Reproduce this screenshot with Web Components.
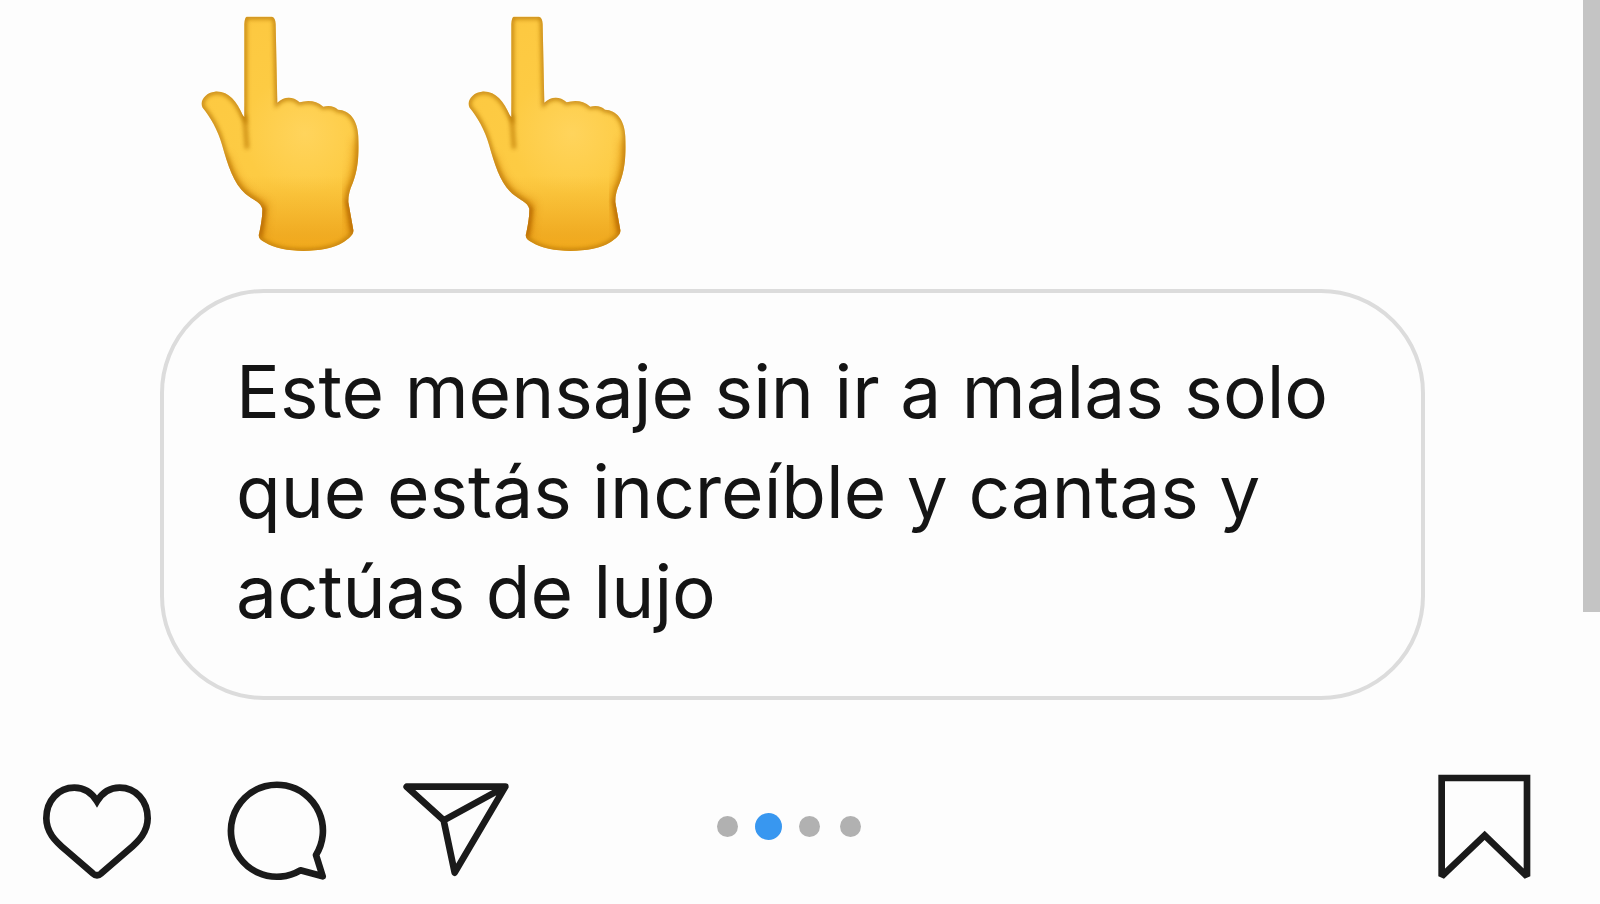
<!DOCTYPE html>
<html lang="es">
<head>
<meta charset="utf-8">
<meta name="viewport" content="width=device-width, initial-scale=1">
<title>Publicación</title>
<style>
  body { margin: 0; background: #fdfdfd; color: #141414; font-family: Inter, "Liberation Sans", sans-serif; }
</style>
</head>
<body>
<post-page>
  <pointing-hand slot="hands"></pointing-hand>
  <pointing-hand slot="hands"></pointing-hand>
  <message-bubble>Este mensaje sin ir a malas solo que estás increíble y cantas y actúas de lujo</message-bubble>
  <post-actions>
    <icon-button slot="start" icon="heart" label="Me gusta"></icon-button>
    <icon-button slot="start" icon="comment" label="Comentar"></icon-button>
    <icon-button slot="start" icon="share" label="Compartir"></icon-button>
    <page-dots count="4" current="2"></page-dots>
    <icon-button slot="end" icon="bookmark" label="Guardar"></icon-button>
  </post-actions>
</post-page>

<script>
  class BaseElement extends HTMLElement {
    connectedCallback() {
      if (this.shadowRoot) return;
      this.attachShadow({ mode: "open" }).innerHTML = this.render();
    }
  }

  customElements.define("post-page", class extends BaseElement {
    render() {
      return `<style>
        :host { display: grid; grid-template-columns: minmax(0, 1fr) 17px; min-height: 100vh; }
        .hands { display: flex; gap: 107px; padding: 16px 0 33px 200px; }
        .track { display: block; }
        .thumb { height: 612px; background: #c4c4c4; }
      </style>
      <main><div class="hands"><slot name="hands"></slot></div><slot></slot></main>
      <div class="track" aria-hidden="true"><div class="thumb"></div></div>`;
    }
  });

  customElements.define("pointing-hand", class extends BaseElement {
    render() {
      const shape = "M200 50 H276 Q286 52 287 72 L292 308 C310 291 336 286 359 307 C382 300 407 300 430 320 C449 316 463 319 474 329 C508 330 533 359 535 409 C537 455 536 505 518 550 Q504 580 505 607 L520 690 C522 704 507 716 490 727 C440 760 308 763 254 727 C239 719 233 711 238 698 Q248 650 247 626 C240 604 221 602 196 581 C161 550 144 497 126 434 C114 390 90 349 68 323 C57 304 77 277 105 275 C145 272 170 304 188 345 L193 352 L193 72 Q194 52 200 50 Z";
      return `<style>
        :host { display: block; flex: none; }
        svg { display: block; width: 160px; height: 240px; }
      </style>
      <svg viewBox="60 48 480 720" role="img" aria-label="Dedo señalando hacia arriba">
        <defs>
          <radialGradient id="skin" gradientUnits="userSpaceOnUse" cx="375" cy="400" r="460">
            <stop offset="0" stop-color="#ffd45c"/><stop offset=".4" stop-color="#fdcb43"/>
            <stop offset=".75" stop-color="#fdc941"/><stop offset="1" stop-color="#fbc23a"/>
          </radialGradient>
          <linearGradient id="wrist" x1="0" y1="0" x2="0" y2="1">
            <stop offset=".68" stop-color="#e69309" stop-opacity="0"/>
            <stop offset=".93" stop-color="#e69309" stop-opacity=".55"/>
            <stop offset="1" stop-color="#f1a514" stop-opacity=".8"/>
          </linearGradient>
          <filter id="soft" x="-20%" y="-20%" width="140%" height="140%"><feGaussianBlur stdDeviation="7"/></filter>
          <filter id="wide" x="-60%" y="-40%" width="220%" height="180%"><feGaussianBlur stdDeviation="15"/></filter>
          <filter id="crease" filterUnits="userSpaceOnUse" x="150" y="300" width="110" height="200"><feGaussianBlur stdDeviation="6"/></filter>
          <clipPath id="hand"><path d="${shape}"/></clipPath>
        </defs>
        <path d="${shape}" fill="url(#skin)"/>
        <g clip-path="url(#hand)">
          <path d="${shape}" fill="url(#wrist)"/>
          <path d="M536 420 Q538 500 505 590 L520 700" fill="none" stroke="#d98305" stroke-width="26" opacity=".7" filter="url(#wide)"/>
          <path d="M130 470 Q170 590 249 616 L238 710" fill="none" stroke="#cf7900" stroke-width="24" opacity=".7" filter="url(#wide)"/>
          <path d="${shape}" fill="none" stroke="#b97808" stroke-width="15" opacity=".8" filter="url(#soft)"/>
          <path d="M194 345 L201 446" fill="none" stroke="#b97600" stroke-width="11" opacity=".8" filter="url(#crease)"/>
          <path d="M250 620 L239 710 M505 600 L520 700" fill="none" stroke="#b86300" stroke-width="14" opacity=".65" filter="url(#soft)"/>
        </g>
      </svg>`;
    }
  });

  customElements.define("message-bubble", class extends BaseElement {
    render() {
      return `<style>
        :host { display: block; box-sizing: border-box; margin: 0 158px 66px 160px; padding: 49px 60px 54px 72px;
                border: 4px solid #dcdcdc; border-radius: 104px; }
        p { margin: 0; font-size: 73px; line-height: 100px; }
      </style><p><slot></slot></p>`;
    }
  });

  customElements.define("post-actions", class extends BaseElement {
    render() {
      return `<style>
        :host { display: grid; grid-template-columns: 1fr auto 1fr; align-items: center; padding: 0 42px 0 37px; }
        .start { display: flex; gap: 60px; }
        .end { display: flex; justify-content: flex-end; }
      </style>
      <div class="start"><slot name="start"></slot></div><slot></slot><div class="end"><slot name="end"></slot></div>`;
    }
  });

  const ICONS = {
    heart: { box: "51 18 360 360", paths: `<path d="M231 124 C214 96 190 83 163 83 C115 83 79 122 79 175 C79 216 104 242 138 271 L218 340 Q231 352 244 340 L324 271 C358 242 383 216 383 175 C383 122 347 83 299 83 C272 83 248 96 231 124 Z"/>` },
    comment: { box: "591 18 360 360", paths: `<path d="M841 331 A138 138 0 1 1 888 285 L908 349 Z" stroke-linejoin="round"/>` },
    share: { box: "51 18 360 360", paths: `<path d="M80 80 H376 L224 338 L191 181 Z M191 181 L376 80" stroke-linejoin="round"/>` },
    bookmark: { box: "63 48 360 360", paths: `<path d="M125 84 H381 V379 L254 256 L125 379 Z"/>` }
  };

  customElements.define("icon-button", class extends BaseElement {
    render() {
      const icon = ICONS[this.getAttribute("icon")];
      return `<style>
        :host { display: block; flex: none; }
        button { display: block; padding: 0; border: 0; background: none; color: #1a1a1a; cursor: pointer; }
        svg { display: block; width: 120px; height: 120px; fill: none; stroke: currentColor; stroke-width: 20; stroke-linejoin: miter; stroke-miterlimit: 2; }
      </style>
      <button type="button" aria-label="${this.getAttribute("label")}"><svg viewBox="${icon.box}" aria-hidden="true">${icon.paths}</svg></button>`;
    }
  });

  customElements.define("page-dots", class extends BaseElement {
    render() {
      const count = Number(this.getAttribute("count"));
      const current = Number(this.getAttribute("current"));
      const dots = Array.from({ length: count }, (_, i) =>
        `<button type="button" aria-label="Página ${i + 1}"${i + 1 === current ? ' aria-current="true"' : ""}></button>`).join("");
      return `<style>
        :host { display: flex; gap: 14px; }
        button { display: grid; place-items: center; width: 27px; height: 27px; padding: 0; border: 0; background: none; cursor: pointer; }
        button::before { content: ""; width: 21px; height: 21px; border-radius: 50%; background: #b1b1b1; }
        button[aria-current]::before { width: 27px; height: 27px; background: #3897f0; }
      </style>${dots}`;
    }
  });
</script>
</body>
</html>
